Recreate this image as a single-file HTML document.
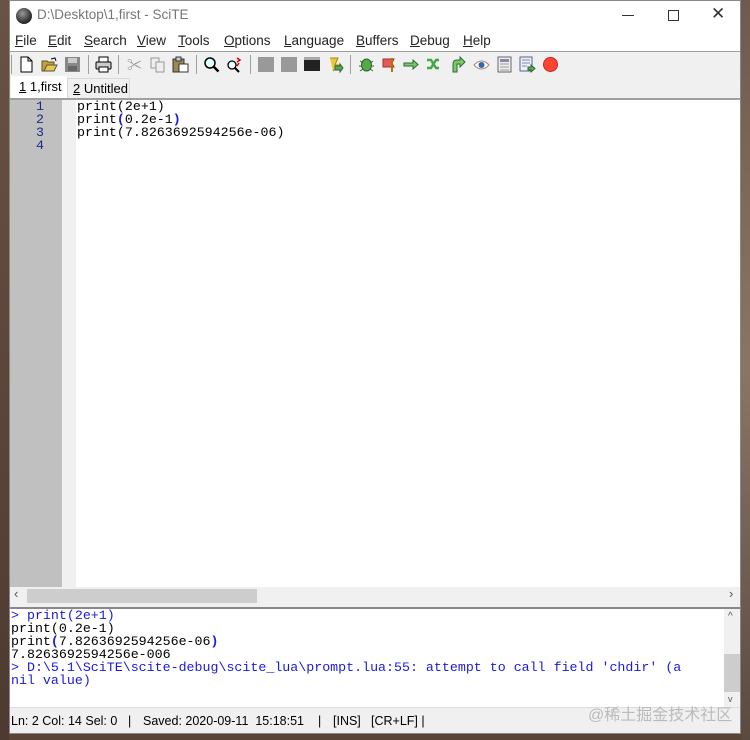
<!DOCTYPE html>
<html><head><meta charset="utf-8"><style>
*{margin:0;padding:0;box-sizing:border-box}
body{width:750px;height:740px;background:#5a4337;position:relative;overflow:hidden;font-family:"Liberation Sans","Noto Sans CJK SC",sans-serif;font-size:13px;color:#000}
.a{position:absolute}
.mono{font-family:"Liberation Mono",monospace;font-size:13.3px;line-height:13px;white-space:pre}
.ic{position:absolute;top:56px;width:17px;height:17px}
.sep{position:absolute;top:55px;width:1px;height:19px;background:#a0a0a0}
.m{position:absolute;top:33px;font-size:13.5px;color:#222}
.st{position:absolute;top:714px;font-size:12.5px;white-space:pre}
u{text-decoration:underline}
</style></head><body>
<div class="a" style="left:0;top:0;width:9px;height:740px;background:linear-gradient(#6a5245,#4d3a30)"></div>
<div class="a" style="left:741px;top:0;width:9px;height:740px;background:linear-gradient(#6f5a4d,#8a7565,#5a4a40)"></div>
<div class="a" style="left:9px;top:0;width:732px;height:734px;background:#f0f0f0;border:1px solid #888"></div>
<!-- title -->
<div class="a" style="left:10px;top:1px;width:730px;height:50px;background:#fff"></div>
<div class="a" style="left:16px;top:8px;width:16px;height:16px;border-radius:50%;background:radial-gradient(circle at 40% 35%,#999,#333 60%,#111)"></div>
<div class="a" style="left:37px;top:7px;color:#777;font-size:13.5px">D:\Desktop\1,first - SciTE</div>
<div class="a" style="left:622px;top:15px;width:12px;height:1px;background:#333"></div>
<div class="a" style="left:668px;top:10px;width:11px;height:11px;border:1px solid #333"></div>
<div class="a" style="left:711px;top:4px;font-size:17px;color:#333">✕</div>
<!-- menu -->
<div class="m" style="left:15px"><u>F</u>ile</div>
<div class="m" style="left:48px"><u>E</u>dit</div>
<div class="m" style="left:84px"><u>S</u>earch</div>
<div class="m" style="left:137px"><u>V</u>iew</div>
<div class="m" style="left:178px"><u>T</u>ools</div>
<div class="m" style="left:224px"><u>O</u>ptions</div>
<div class="m" style="left:284px"><u>L</u>anguage</div>
<div class="m" style="left:356px"><u>B</u>uffers</div>
<div class="m" style="left:410px"><u>D</u>ebug</div>
<div class="m" style="left:463px"><u>H</u>elp</div>
<div class="a" style="left:10px;top:51px;width:730px;height:1px;background:#a0a0a0"></div>
<!-- toolbar -->
<div class="sep" style="left:11px"></div>
<svg class="ic" style="left:18px" viewBox="0 0 17 17"><path d="M3 1h7l4 4v11H3z" fill="#fff" stroke="#000"/><path d="M10 1v4h4" fill="none" stroke="#000"/></svg>
<svg class="ic" style="left:41px" viewBox="0 0 17 17"><path d="M1 5h5l1 1h6v9H1z" fill="#c8a030" stroke="#554"/><path d="M3 15l3-6h10l-3 6z" fill="#e8c850" stroke="#554"/><path d="M10 3l4-1 1 3" stroke="#000" fill="none"/></svg>
<svg class="ic" style="left:64px" viewBox="0 0 17 17"><rect x="1" y="1" width="15" height="15" fill="#888"/><rect x="4" y="2" width="9" height="5" fill="#ccc"/><rect x="4" y="10" width="9" height="5" fill="#666"/></svg>
<div class="sep" style="left:88px"></div>
<svg class="ic" style="left:95px" viewBox="0 0 17 17"><rect x="4" y="1" width="9" height="5" fill="#fff" stroke="#000"/><rect x="1" y="6" width="15" height="7" rx="1" fill="#ccc" stroke="#000"/><rect x="4" y="11" width="9" height="5" fill="#fff" stroke="#000"/></svg>
<div class="sep" style="left:118px"></div>
<div class="a" style="left:127px;top:54px;color:#999;font-size:15px">✂</div>
<svg class="ic" style="left:149px" viewBox="0 0 17 17"><rect x="2" y="2" width="8" height="10" fill="#eee" stroke="#999"/><rect x="7" y="6" width="8" height="10" fill="#eee" stroke="#999"/></svg>
<svg class="ic" style="left:172px" viewBox="0 0 17 17"><rect x="1" y="3" width="11" height="13" fill="#9a8a50" stroke="#333"/><rect x="4" y="1" width="5" height="4" fill="#ccc" stroke="#333"/><rect x="7" y="8" width="9" height="8" fill="#fff" stroke="#333"/></svg>
<div class="sep" style="left:196px"></div>
<svg class="ic" style="left:203px" viewBox="0 0 17 17"><circle cx="7" cy="7" r="5" fill="#dff" stroke="#000" stroke-width="1.5"/><path d="M10.5 10.5l5 5" stroke="#000" stroke-width="2.5"/></svg>
<svg class="ic" style="left:226px" viewBox="0 0 17 17"><circle cx="6" cy="9" r="4" fill="#eff" stroke="#000" stroke-width="1.3"/><path d="M9 12l4 4" stroke="#000" stroke-width="2"/><path d="M11 2l3 2-3 2M13 7l-2 3" stroke="#c00" stroke-width="1.5" fill="none"/></svg>
<div class="sep" style="left:250px"></div>
<div class="a" style="left:258px;top:57px;width:16px;height:15px;background:#999"></div>
<div class="a" style="left:281px;top:57px;width:16px;height:15px;background:#999"></div>
<div class="a" style="left:304px;top:57px;width:16px;height:14px;background:#222;border-top:3px solid #aaa"></div>
<svg class="ic" style="left:327px" viewBox="0 0 17 17"><path d="M3 2h8l-3 7h5L6 15" fill="#e8c840" stroke="#a80"/><path d="M8 10h5v-2l3 4-3 4v-2H8z" fill="#5a5" stroke="#363"/></svg>
<div class="sep" style="left:350px"></div>
<svg class="ic" style="left:358px" viewBox="0 0 17 17"><ellipse cx="8.5" cy="9" rx="5" ry="6" fill="#5a4" stroke="#363"/><path d="M2 5l3 2M15 5l-3 2M1 10h3M16 10h-3M2 15l3-2M15 15l-3-2" stroke="#363"/></svg>
<svg class="ic" style="left:381px" viewBox="0 0 17 17"><path d="M2 3h11l-2 4 2 4H2z" fill="#e55" stroke="#933"/><rect x="10" y="2" width="2" height="14" fill="#a70"/></svg>
<svg class="ic" style="left:403px" viewBox="0 0 17 17"><path d="M1 7h9V4l5 4.5-5 4.5v-3H1z" fill="#7c6" stroke="#363"/></svg>
<svg class="ic" style="left:426px" viewBox="0 0 17 17"><path d="M1 4h4l5 8h3M1 12h4l5-8h3" stroke="#4a4" stroke-width="2.5" fill="none"/></svg>
<svg class="ic" style="left:449px" viewBox="0 0 17 17"><path d="M4 16V8q0-4 4-4h3V1l5 5-5 5V8H8v8z" fill="#7c6" stroke="#363"/></svg>
<svg class="ic" style="left:473px" viewBox="0 0 17 17"><path d="M1 9q7.5-8 15 0q-7.5 8-15 0z" fill="#fff" stroke="#a87"/><circle cx="8.5" cy="9" r="3" fill="#36a"/></svg>
<svg class="ic" style="left:496px" viewBox="0 0 17 17"><rect x="2" y="1" width="13" height="15" fill="#eee" stroke="#666"/><rect x="4" y="3" width="9" height="3" fill="#88a"/><path d="M4 8h9M4 11h9M4 14h9" stroke="#999"/></svg>
<svg class="ic" style="left:519px" viewBox="0 0 17 17"><rect x="1" y="1" width="12" height="14" fill="#eef" stroke="#568"/><path d="M3 4h8M3 7h8M3 10h5" stroke="#88a"/><path d="M9 11h3V9l4 3.5-4 3.5v-2H9z" fill="#5a5" stroke="#363"/></svg>
<svg class="ic" style="left:542px" viewBox="0 0 17 17"><circle cx="8.5" cy="8.5" r="7" fill="#f43" stroke="#c22"/></svg>
<!-- tabs -->
<div class="a" style="left:10px;top:76px;width:730px;height:23px;background:#f0f0f0"></div>
<div class="a" style="left:11px;top:76px;width:56px;height:23px;background:#fff"></div>
<div class="a" style="left:19px;top:79px"><u>1</u> 1,first</div>
<div class="a" style="left:67px;top:78px;width:63px;height:21px;border:1px solid #d8d8d8;border-bottom:none"></div>
<div class="a" style="left:73px;top:81px"><u>2</u> Untitled</div>
<div class="a" style="left:10px;top:98px;width:730px;height:2px;background:#a0a0a0"></div>
<!-- editor -->
<div class="a" style="left:10px;top:100px;width:730px;height:487px;background:#fff"></div>
<div class="a" style="left:10px;top:100px;width:52px;height:487px;background:#c0c0c0"></div>
<div class="a" style="left:62px;top:100px;width:14px;height:487px;background:#f0f0f0"></div>
<div class="a mono" style="left:18px;top:100px;width:26px;text-align:right;color:#1c2a8a">1
2
3
4</div>
<div class="a mono" style="left:77px;top:100px">print(2e+1)
print<b style="color:#1a1adb">(</b>0.2e-1<b style="color:#1a1adb">)</b>
print(7.8263692594256e-06)</div>
<!-- hscroll -->
<div class="a" style="left:10px;top:587px;width:730px;height:18px;background:#f0f0f0"></div>
<div class="a" style="left:27px;top:589px;width:230px;height:14px;background:#cdcdcd"></div>
<div class="a" style="left:14px;top:586px;color:#555;font-size:13px">‹</div>
<div class="a" style="left:729px;top:586px;color:#555;font-size:13px">›</div>
<div class="a" style="left:10px;top:606px;width:730px;height:3px;background:#f0f0f0;border-bottom:2px solid #888"></div>
<!-- output -->
<div class="a" style="left:10px;top:609px;width:730px;height:98px;background:#fff"></div>
<div class="a mono" style="left:11px;top:609px"><span style="color:#1a1adb">&gt; print(2e+1)</span>
print(0.2e-1)
print<b style="color:#1a1adb">(</b>7.8263692594256e-06<b style="color:#1a1adb">)</b>
7.8263692594256e-006
<span style="color:#1a1adb">&gt; D:\5.1\SciTE\scite-debug\scite_lua\prompt.lua:55: attempt to call field 'chdir' (a
nil value)</span></div>
<div class="a" style="left:724px;top:609px;width:16px;height:98px;background:#f0f0f0"></div>
<div class="a" style="left:724px;top:654px;width:16px;height:38px;background:#cdcdcd"></div>
<div class="a" style="left:728px;top:611px;font-size:10px;color:#555">^</div>
<div class="a" style="left:728px;top:694px;font-size:9px;color:#555">v</div>
<!-- status -->
<div class="a" style="left:10px;top:707px;width:730px;height:26px;background:#f0f0f0;border-top:1px solid #ddd"></div>
<div class="st" style="left:11px">Ln: 2 Col: 14 Sel: 0</div>
<div class="st" style="left:128px">|</div>
<div class="st" style="left:143px">Saved: 2020-09-11  15:18:51</div>
<div class="st" style="left:318px">|</div>
<div class="st" style="left:333px">[INS]</div>
<div class="st" style="left:371px">[CR+LF] |</div>
<div class="a" style="left:588px;top:701px;font-size:16px;color:#bbb">@稀土掘金技术社区</div>
</body></html>
